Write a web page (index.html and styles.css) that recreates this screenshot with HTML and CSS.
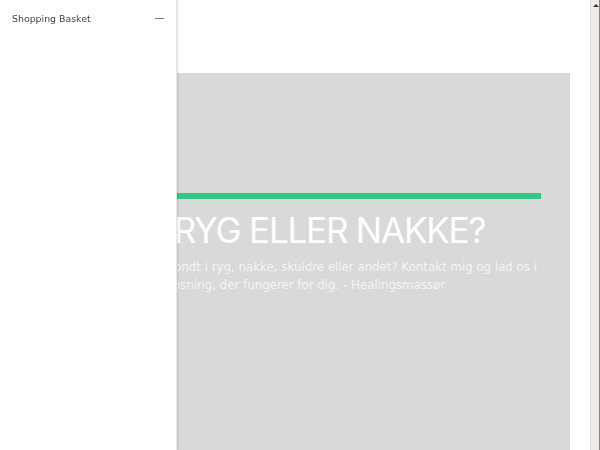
FILE: index.html
```html
<!DOCTYPE html>
<html lang="da">
<head>
<meta charset="utf-8">
<title>Healingsmassør</title>
<link rel="stylesheet" href="styles.css">
</head>
<body>
<div class="page">
  <main class="main">
    <section class="hero">
      <div class="hero-inner">
        <div class="accent"></div>
        <h1 class="hero-title">ONDT I RYG ELLER NAKKE?</h1>
        <p class="hero-text">Oplever du at have ondt i ryg, nakke, skuldre eller andet? Kontakt mig og lad os i fællesskab finde en løsning, der fungerer for dig. - Healingsmassør</p>
      </div>
    </section>
  </main>
  <div class="scrollbar">
    <div class="scroll-up"></div>
    <div class="scroll-track"></div>
  </div>
</div>
<aside class="basket">
  <div class="basket-head">
    <span class="basket-title">Shopping Basket</span>
    <span class="basket-toggle"></span>
  </div>
</aside>
</body>
</html>
```
FILE: styles.css
```css
html, body {
  margin: 0;
  padding: 0;
  height: 100%;
  overflow: hidden;
  background: #ffffff;
}
body {
  font-family: "DejaVu Sans", sans-serif;
}
.page {
  display: flex;
  height: 450px;
}
.main {
  flex: 1;
  padding: 73px 20px 0 28px;
  min-width: 0;
}
.hero {
  background: #d9d9d9;
  height: 100%;
}
.hero-inner {
  padding: 120px 29px 0 29px;
}
.accent {
  height: 6px;
  background: #33c784;
}
.hero-title {
  margin: 11px 0 0 -4px;
  font-family: "Inter", sans-serif;
  font-weight: 400;
  font-size: 35px;
  letter-spacing: -1.2px;
  line-height: 40px;
  color: #ffffff;
  white-space: nowrap;
}
.hero-text {
  margin: 8px -10px 0 -6px;
  text-indent: 6px;
  font-size: 11.8px;
  line-height: 18px;
  color: #f4f4f4;
}
.scrollbar {
  width: 10px;
  display: flex;
  flex-direction: column;
  background: #efebe8;
  border-left: 1px solid #e2dedb;
  border-right: 1px solid #8a8684;
  box-sizing: border-box;
}
.scroll-up {
  height: 10px;
  position: relative;
}
.scroll-up::after {
  content: "";
  position: absolute;
  left: 2px;
  top: 4px;
  border-left: 3px solid transparent;
  border-right: 3px solid transparent;
  border-bottom: 3px solid #333;
}
.scroll-track {
  flex: 1;
}
.basket {
  position: fixed;
  left: 0;
  top: 0;
  bottom: 0;
  width: 176px;
  background: #ffffff;
  box-shadow: 1px 0 2px rgba(0, 0, 0, 0.12);
  border-right: 1px solid #e6e6e6;
}
.basket-head {
  display: flex;
  align-items: center;
  justify-content: space-between;
  padding: 11px 12px 0 12px;
  height: 14px;
}
.basket-title {
  font-size: 9.4px;
  color: #444444;
}
.basket-toggle {
  width: 9px;
  height: 1px;
  background: #777777;
}
```
